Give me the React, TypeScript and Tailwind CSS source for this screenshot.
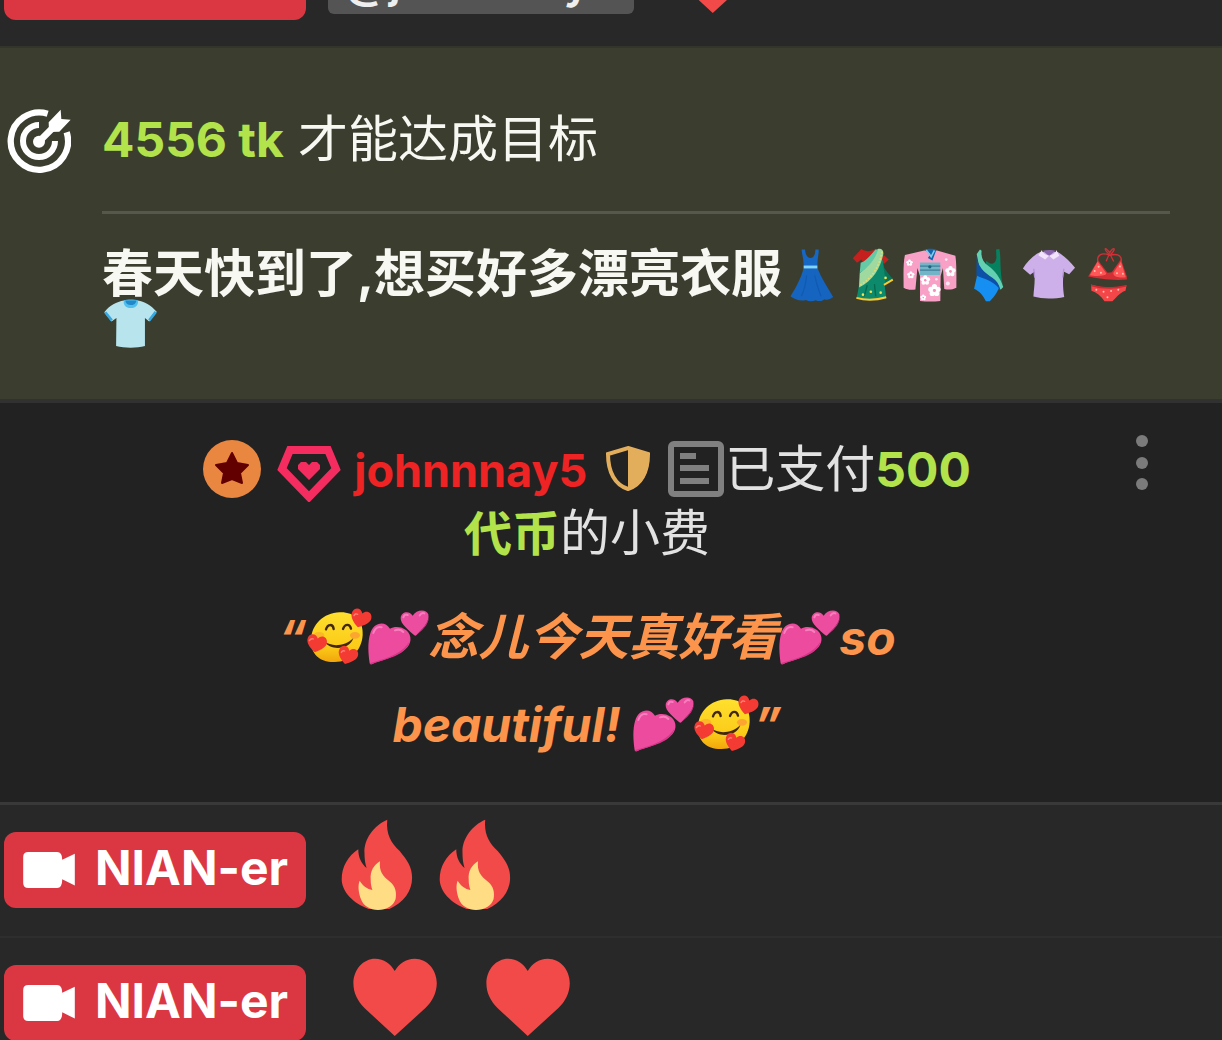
import type { ReactNode } from "react";

function TargetIcon() {
  return (
    <svg viewBox="21 54 192 192" className="size-16 shrink-0" aria-hidden="true">
      <path d="M143 68 A86 86 0 1 0 200 124" fill="none" stroke="#fff" strokeWidth="19" />
      <path d="M117 102 A48 48 0 1 0 165 150" fill="none" stroke="#fff" strokeWidth="18" />
      <circle cx="117" cy="152" r="18" fill="#fff" />
      <path d="M117 152 L162 107" stroke="#fff" strokeWidth="20" />
      <path d="M182 56 L184 84 L212 86 L178 122 L147 123 L146 94Z" fill="#fff" />
    </svg>
  );
}

function Clothing({ viewBox, label, children }: { viewBox: string; label: string; children: ReactNode }) {
  return (
    <svg viewBox={viewBox} role="img" aria-label={label} className="inline-block h-[50px] w-[59px] overflow-visible align-bottom">
      {children}
    </svg>
  );
}

function Dress() {
  return (
    <Clothing viewBox="-9 39 180 150" label="dress">
      <path d="M51 39 L61 39 C63 57 69 65 78 65 C87 65 92 57 93 39 L103 39 C103 57 99 66 99 88 L57 88 C57 66 52 57 51 39Z" fill="#1667c4" />
      <path d="M57 96 L99 96 C110 125 130 155 147 184 C137 191 128 195 121 191 C112 198 102 198 94 194 C83 199 73 198 64 193 C50 198 30 193 17 182 C34 155 50 125 57 96Z" fill="#1565c0" />
      <path d="M66 118 C64 145 58 165 50 182 M91 118 C96 145 104 165 110 182" fill="none" stroke="#115ab2" strokeWidth="4" />
      <path d="M57 88 H99 V97 H57Z" fill="#81d4fa" />
    </Clothing>
  );
}

function Sari() {
  return (
    <Clothing viewBox="171 39 180 150" label="sari">
      <path d="M207 66 L233 38 C245 46 262 47 276 38 L300 55 L317 70 L303 83 L290 75 L240 82 L233 70 L220 80Z" fill="#c4201d" />
      <path d="M234 82 L299 72 C300 90 304 104 310 118 L329 130 L304 147 L309 187 C282 195 246 197 218 188 C226 160 229 120 234 82Z" fill="#0c8a6b" />
      <path d="M300 90 C308 104 318 116 330 130 L304 147 C308 130 304 110 300 90Z" fill="#087358" />
      <path d="M283 38 C294 34 302 42 300 54 C291 98 268 135 226 155 L228 112 C250 95 270 68 283 38Z" fill="#9fd9a0" />
      <path d="M231 80 C249 74 263 54 276 39 L284 39 C276 70 252 96 228 111Z" fill="#66c9a5" />
      <path d="M296 46 C289 92 262 131 228 149" fill="none" stroke="#e9dc6b" strokeWidth="5" strokeDasharray="5 5" />
      <path d="M218 187 C246 195 282 193 309 185 M302 147 L329 131" fill="none" stroke="#fbc934" strokeWidth="6" />
      <path d="M251 148 L242 182 M273 145 L277 182" stroke="#06694f" strokeWidth="4" />
      <g fill="#f5e04d">
        <circle cx="262" cy="168" r="4" />
        <circle cx="292" cy="171" r="4" />
        <circle cx="238" cy="177" r="4" />
        <circle cx="307" cy="126" r="4" />
      </g>
    </Clothing>
  );
}

function Flower({ x, y, r }: { x: number; y: number; r: number }) {
  return (
    <g fill="#fff" transform={`translate(${x} ${y}) scale(${r})`}>
      <circle cy="-0.6" r="0.42" />
      <circle cx="0.57" cy="-0.18" r="0.42" />
      <circle cx="0.35" cy="0.5" r="0.42" />
      <circle cx="-0.35" cy="0.5" r="0.42" />
      <circle cx="-0.57" cy="-0.18" r="0.42" />
      <circle r="0.24" fill="#f590bb" />
    </g>
  );
}

function Kimono() {
  return (
    <Clothing viewBox="351 39 180 150" label="kimono">
      <path d="M425 42 L366 56 C360 82 362 125 362 156 C374 163 386 163 398 161 L404 96 L412 120 L412 196 C432 199 453 199 474 196 L475 120 L482 96 L486 160 C499 163 511 162 523 156 C523 124 524 83 520 58 L464 42Z" fill="#f9a0c6" />
      <path d="M412 79 H474 V117 H412Z" fill="#71b5c6" />
      <path d="M412 90 H474 M412 102 H474" stroke="#417f99" strokeWidth="4" />
      <path d="M425 40 C434 36 454 36 462 40 L450 73 L436 65 L444 53Z" fill="#1564ac" />
      <path d="M431 41 L446 61 L456 42" fill="none" stroke="#7ccbed" strokeWidth="5" />
      <circle cx="442" cy="92" r="5" fill="#1c6482" />
      <Flower x={428} y={133} r={15} />
      <Flower x={456} y={164} r={19} />
      <Flower x={505} y={106} r={16} />
      <Flower x={384} y={117} r={11} />
      <Flower x={422} y={186} r={9} />
      <Flower x={380} y={80} r={10} />
      <g fill="#fde8f1">
        <circle cx="492" cy="70" r="4" />
        <circle cx="462" cy="130" r="4" />
        <circle cx="497" cy="143" r="6" />
      </g>
    </Clothing>
  );
}

function Swimsuit() {
  return (
    <Clothing viewBox="-9 39 180 150" label="one-piece swimsuit">
      <path d="M74 84 C72 74 74 72 82 80 C94 88 106 78 105 60 L104 39 L114 38 C120 62 114 95 124 145 L119 154Z" fill="#06815f" />
      <path d="M45 53 L55 39 L60 43 C57 63 65 78 80 89 C102 106 116 124 126 154 L118 162 C106 137 77 124 53 94Z" fill="#64d0b2" />
      <path d="M45 53 C44 90 70 111 94 126 C106 134 113 145 117 161 L101 165 L44 120Z" fill="#0d51a7" />
      <path d="M46 119 C67 129 94 133 112 157 C108 171 96 187 85 197 L73 197 C65 181 54 166 37 159Z" fill="#1590f2" />
    </Clothing>
  );
}

function Blouse() {
  return (
    <Clothing viewBox="171 39 180 150" label="blouse">
      <path d="M239 47 C217 57 199 76 186 97 L208 116 L221 107 C224 136 219 163 218 183 C246 191 284 190 312 184 C308 162 307 135 310 106 L327 115 L345 95 C329 74 309 57 292 47Z" fill="#cdb0ea" />
      <path d="M246 43 C258 40 276 40 286 43 L266 59Z" fill="#8966aa" />
      <path d="M244 41 L233 57 L254 70 L266 58 L279 70 L297 58 L288 41 C286 52 275 56 266 58 C256 56 246 51 244 41Z" fill="#f1e3fa" />
      <path d="M219 98 L222 125 M311 98 L307 125" stroke="#b794d8" strokeWidth="4" />
    </Clothing>
  );
}

function Bikini() {
  return (
    <Clothing viewBox="351 39 180 150" label="bikini">
      <path d="M416 85 C407 53 428 48 451 57 C479 49 492 61 484 86 M451 55 C430 37 435 28 451 49 C462 29 474 35 453 55 M449 54 L440 75 M453 56 L463 76" fill="none" stroke="#d42f37" strokeWidth="4" />
      <path d="M415 72 L444 110 L457 109 L485 69 L503 122 L503 131 C459 135 416 128 385 122Z" fill="#d32f34" />
      <path d="M414 76 L440 112 C442 122 403 121 390 118Z M485 76 L462 110 C460 123 482 127 500 124Z" fill="#ff5758" />
      <path d="M394 146 C430 158 470 157 502 148 L499 165 C480 171 472 185 459 197 L435 197 C424 180 410 169 395 165Z" fill="#f34649" />
      <path d="M394 149 C430 159 470 158 502 150" fill="none" stroke="#cb2831" strokeWidth="5" />
      <g fill="#ffc2ad">
        <circle cx="405" cy="105" r="3" />
        <circle cx="417" cy="92" r="3" />
        <circle cx="424" cy="110" r="3" />
        <circle cx="482" cy="91" r="3" />
        <circle cx="473" cy="112" r="3" />
        <circle cx="491" cy="113" r="3" />
        <circle cx="410" cy="162" r="3" />
        <circle cx="432" cy="168" r="3" />
        <circle cx="455" cy="166" r="3" />
        <circle cx="477" cy="162" r="3" />
        <circle cx="444" cy="185" r="3" />
      </g>
    </Clothing>
  );
}

function TShirt() {
  return (
    <Clothing viewBox="36 204 180 150" label="t-shirt">
      <path d="M103 207 C80 211 60 221 43 243 L65 271 L80 261 L79 346 C106 353 141 353 167 346 L167 261 L180 271 L203 242 C185 220 165 210 145 207Z" fill="#b8e5ed" />
      <path d="M103 207 C110 203 137 203 145 207 C149 219 139 230 124 230 C108 230 99 219 103 207Z" fill="#52bfed" />
      <path d="M107 207 H141 C139 218 132 221 124 221 C115 221 108 217 107 207Z" fill="#2288c7" />
      <path d="M46 243 L66 268 M200 242 L180 268" stroke="#35a9e3" strokeWidth="8" />
    </Clothing>
  );
}

const smallHeart = "M0 25 C-18 15 -31 2 -28 -12 C-25 -27 -7 -29 0 -15 C8 -29 26 -26 28 -10 C30 3 17 14 0 25Z";

function LoveFace() {
  return (
    <svg viewBox="113 -10 183 261" role="img" aria-label="smiling face with hearts" className="inline-block h-[87px] w-[61px] overflow-visible align-bottom">
      <defs>
        <linearGradient id="face" x1="0" y1="0" x2="0" y2="1">
          <stop offset="0" stopColor="#ffdf2e" />
          <stop offset="0.7" stopColor="#fbcb18" />
          <stop offset="1" stopColor="#f2a50c" />
        </linearGradient>
      </defs>
      <path d="M214 45 C256 43 286 70 283 113 C280 160 247 193 199 194 C154 195 127 170 128 127 C130 82 165 47 214 45Z" fill="url(#face)" />
      <ellipse cx="152" cy="114" rx="16" ry="10" fill="#fb9b31" opacity=".5" />
      <ellipse cx="260" cy="114" rx="15" ry="10" fill="#fb813f" opacity=".55" />
      <path d="M173 96 C178 79 194 79 196 95 M224 95 C230 78 245 79 248 94" fill="none" stroke="#42270b" strokeWidth="7" strokeLinecap="round" />
      <path d="M168 132 C190 150 230 147 255 122 C246 157 185 162 168 132Z" fill="#42270b" />
      <g fill="#f33b33">
        <path d={smallHeart} transform="translate(277 64) rotate(18) scale(1.08)" />
        <path d={smallHeart} transform="translate(145 139) rotate(12) scale(1.05)" />
        <path d={smallHeart} transform="translate(238 175) rotate(18) scale(1.05)" />
      </g>
      <g fill="none" stroke="#ff8277" strokeWidth="4" strokeLinecap="round">
        <path d="M257 55 Q261 47 268 51 M123 130 Q128 122 135 125 M219 165 Q223 158 229 161" />
      </g>
    </svg>
  );
}

function TwoHearts() {
  return (
    <svg viewBox="296 -10 183 261" role="img" aria-label="two hearts" className="inline-block h-[87px] w-[61px] overflow-visible align-bottom">
      <path d="M304 198 C300 171 297 136 306 108 C314 77 349 67 365 94 C385 83 420 91 426 119 C430 143 411 159 387 171 C358 187 331 191 313 200 C308 202 305 202 304 198Z" fill="#ed4b9e" />
      <path d="M304 198 C343 186 399 174 424 132 C417 157 399 168 379 177 C350 189 326 192 310 201Z" fill="#d63587" />
      <path d="M438 114 C423 99 395 80 397 61 C399 43 422 38 433 55 C444 36 474 34 480 51 C485 75 461 96 444 114 C442 116 440 116 438 114Z" fill="#ec4d9f" />
      <path d="M440 116 C459 99 478 80 481 60 C482 82 459 102 440 116Z" fill="#d63587" />
      <path d="M315 107 Q323 85 340 90 M405 60 Q409 49 418 53 M380 99 Q396 93 405 104 M454 54 Q461 44 468 48" fill="none" stroke="#f67fbd" strokeWidth="6" strokeLinecap="round" />
    </svg>
  );
}

function Flame() {
  return (
    <svg viewBox="961 123 284 228" preserveAspectRatio="none" role="img" aria-label="fire" className="h-[76px] w-[98px] overflow-visible">
      <path d="M1124 86 C1085 103 1056 145 1058 185 C1058 203 1060 217 1064 231 C1049 218 1040 200 1040 175 C1010 195 992 228 992 265 C992 302 1026 338 1070 354 L1130 354 C1172 334 1196 300 1196 260 C1196 228 1182 208 1160 180 C1135 155 1120 130 1124 86Z" fill="#f14a49" />
      <path d="M1103 211 C1085 222 1074 240 1076 266 C1076 278 1078 288 1081 297 C1066 294 1053 284 1044 269 C1038 285 1041 305 1048 325 C1054 345 1075 357 1097 357 C1122 357 1142 345 1148 325 C1152 305 1148 285 1132 272 C1110 255 1100 240 1103 211Z" fill="#fedd84" />
    </svg>
  );
}

function Heart() {
  return (
    <svg viewBox="961 522 386 228" preserveAspectRatio="none" role="img" aria-label="heart" className="h-[76px] w-[133px] overflow-visible">
      <path d="M1146 735 L1058 651 C1038 630 1026 606 1026 577 C1026 535 1055 503 1089 503 C1115 503 1134 518 1146 540 C1158 518 1178 503 1204 503 C1241 503 1268 537 1268 577 C1268 606 1254 633 1235 651Z" fill="#f14a49" />
    </svg>
  );
}

function ModelBadge() {
  return (
    <a href="#nian-er" className="flex h-[76px] shrink-0 items-center gap-5 rounded-xl bg-[#db3742] pr-[18px] pl-[19px] text-5xl font-bold text-white">
      <svg viewBox="66 188 152 106" className="h-[36px] w-[52px]" aria-hidden="true">
        <path d="M81 188 H166 Q181 188 181 211 L218 193 V287 L181 268 Q181 294 166 294 H81 Q66 294 66 279 V203 Q66 188 81 188Z" fill="#fff" />
      </svg>
      <span className="pb-1">NIAN-er</span>
    </a>
  );
}

function Message({ children }: { children: ReactNode }) {
  return (
    <div className="flex shrink-0 items-center border-b-2 border-[#2e2e2e] bg-[#282828] pt-[27px] pb-[28px] pl-1">
      <ModelBadge />
      <div className="ml-[25px] flex">{children}</div>
    </div>
  );
}

export default function App() {
  return (
    <main className="flex h-screen flex-col overflow-hidden bg-[#282828] font-['Inter','Noto_Sans_CJK_SC',sans-serif] text-[50px]">
      {/* Message scrolled partly out of view */}
      <div className="flex h-12 shrink-0 items-end overflow-hidden border-b-2 border-[#33352d] bg-[#282828] pb-[26px] pl-1">
        <ModelBadge />
        <a href="#johnnnay5" className="mb-[6px] ml-[22px] rounded-md bg-[#545454] px-4 pb-1 text-[45px] leading-[56px] font-semibold text-[#eee]">
          @johnnnay5
        </a>
        <div className="mb-[2px] ml-[15px]">
          <Heart />
        </div>
      </div>

      {/* Goal */}
      <section className="flex shrink-0 gap-[31px] border-b-4 border-[#313131] bg-[#3b3e2f] pt-[61px] pr-[52px] pb-[50px] pl-[7px] text-[#f8f8f3]">
        <TargetIcon />
        <div className="flex-1">
          <p className="leading-[60px]">
            <strong className="text-[48px] font-bold text-[#b2e34b]">4556 tk</strong> 才能达成目标
          </p>
          <hr className="mt-[41px] mb-[35px] border-t-3 border-[#55584a]" />
          <h1 className="text-[51px] leading-[50px] font-bold">
            春天快到了,想买好多漂亮衣服
            <Dress />
            <Sari />
            <Kimono />
            <Swimsuit />
            <Blouse />
            <Bikini />
            <TShirt />
          </h1>
        </div>
      </section>

      {/* Tip */}
      <section className="grid shrink-0 grid-cols-[1fr_minmax(0,800px)_1fr] border-b-3 border-[#393939] bg-[#222] pt-[35px] pr-12 pb-[34px] text-center">
        <div className="col-start-2">
          <p className="leading-[63px] text-[#e2e2e2]">
            <svg viewBox="0 0 59 63" className="mr-[15px] inline-block h-[63px] w-[59px] align-bottom" role="img" aria-label="top tipper">
              <circle cx="29" cy="30" r="29" fill="#e98740" />
              <path d="M29 14 L34 24 L45 26 L37 34 L39 44 L29 40 L19 44 L21 34 L13 26 L24 24Z" fill="#620000" stroke="#620000" strokeWidth="2" strokeLinejoin="round" />
            </svg>
            <svg viewBox="0 0 64 63" className="mr-[13px] inline-block h-[63px] w-[64px] align-bottom" role="img" aria-label="fan club">
              <path d="M13 11 H51 L59 30 L32 58 L5 30Z" fill="none" stroke="#f52c60" strokeWidth="8" />
              <path d="M32 41 L21 30 V26 L24 23 H29 L32 26 L35 23 H40 L43 26 V30Z" fill="#f52c60" />
            </svg>
            <a href="#johnnnay5" className="text-[45px] font-bold text-[#ee2324]">
              johnnnay5
            </a>
            <svg viewBox="0 0 46 63" className="mr-[17px] ml-[18px] inline-block h-[63px] w-[46px] align-bottom" role="img" aria-label="moderator">
              <path d="M23 9 L43 15 C43 33 36 46 23 50 C10 46 3 33 3 15Z" fill="none" stroke="#e3ae5c" strokeWidth="4" />
              <path d="M23 8 L44 14 C45 33 37 48 23 51Z" fill="#e3ae5c" />
            </svg>
            <svg viewBox="0 0 57 63" className="inline-block h-[63px] w-[57px] align-bottom" role="img" aria-label="note">
              <rect x="3" y="5" width="50" height="50" rx="3" fill="none" stroke="#808080" strokeWidth="6" />
              <path d="M12 17 H28 M12 29 H41 M12 42 H41" stroke="#808080" strokeWidth="6" />
            </svg>
            已支付<strong className="text-[48px] font-bold text-[#b2e34b]">500</strong>{" "}
            <strong className="text-[48px] font-bold text-[#b2e34b]">代币</strong>的小费
          </p>
          <p className="mt-[29px] text-[48px] leading-[87px] font-bold text-[#fc944c] italic">
            “<LoveFace />
            <TwoHearts />
            <span className="text-[50px]">念儿今天真好看</span>
            <TwoHearts />
            <span>so</span> <span>beautiful!</span> <TwoHearts />
            <LoveFace />”
          </p>
        </div>
        <button type="button" aria-label="More options" className="flex h-[60px] w-16 items-center justify-center justify-self-end">
          <svg viewBox="0 5 12 60" className="h-[60px] w-3 overflow-visible" fill="#7b7b7b" aria-hidden="true">
            <circle cx="6" cy="8" r="6" />
            <circle cx="6" cy="30" r="6" />
            <circle cx="6" cy="51" r="6" />
          </svg>
        </button>
      </section>

      <Message>
        <Flame />
        <Flame />
      </Message>
      <Message>
        <Heart />
        <Heart />
      </Message>
    </main>
  );
}
